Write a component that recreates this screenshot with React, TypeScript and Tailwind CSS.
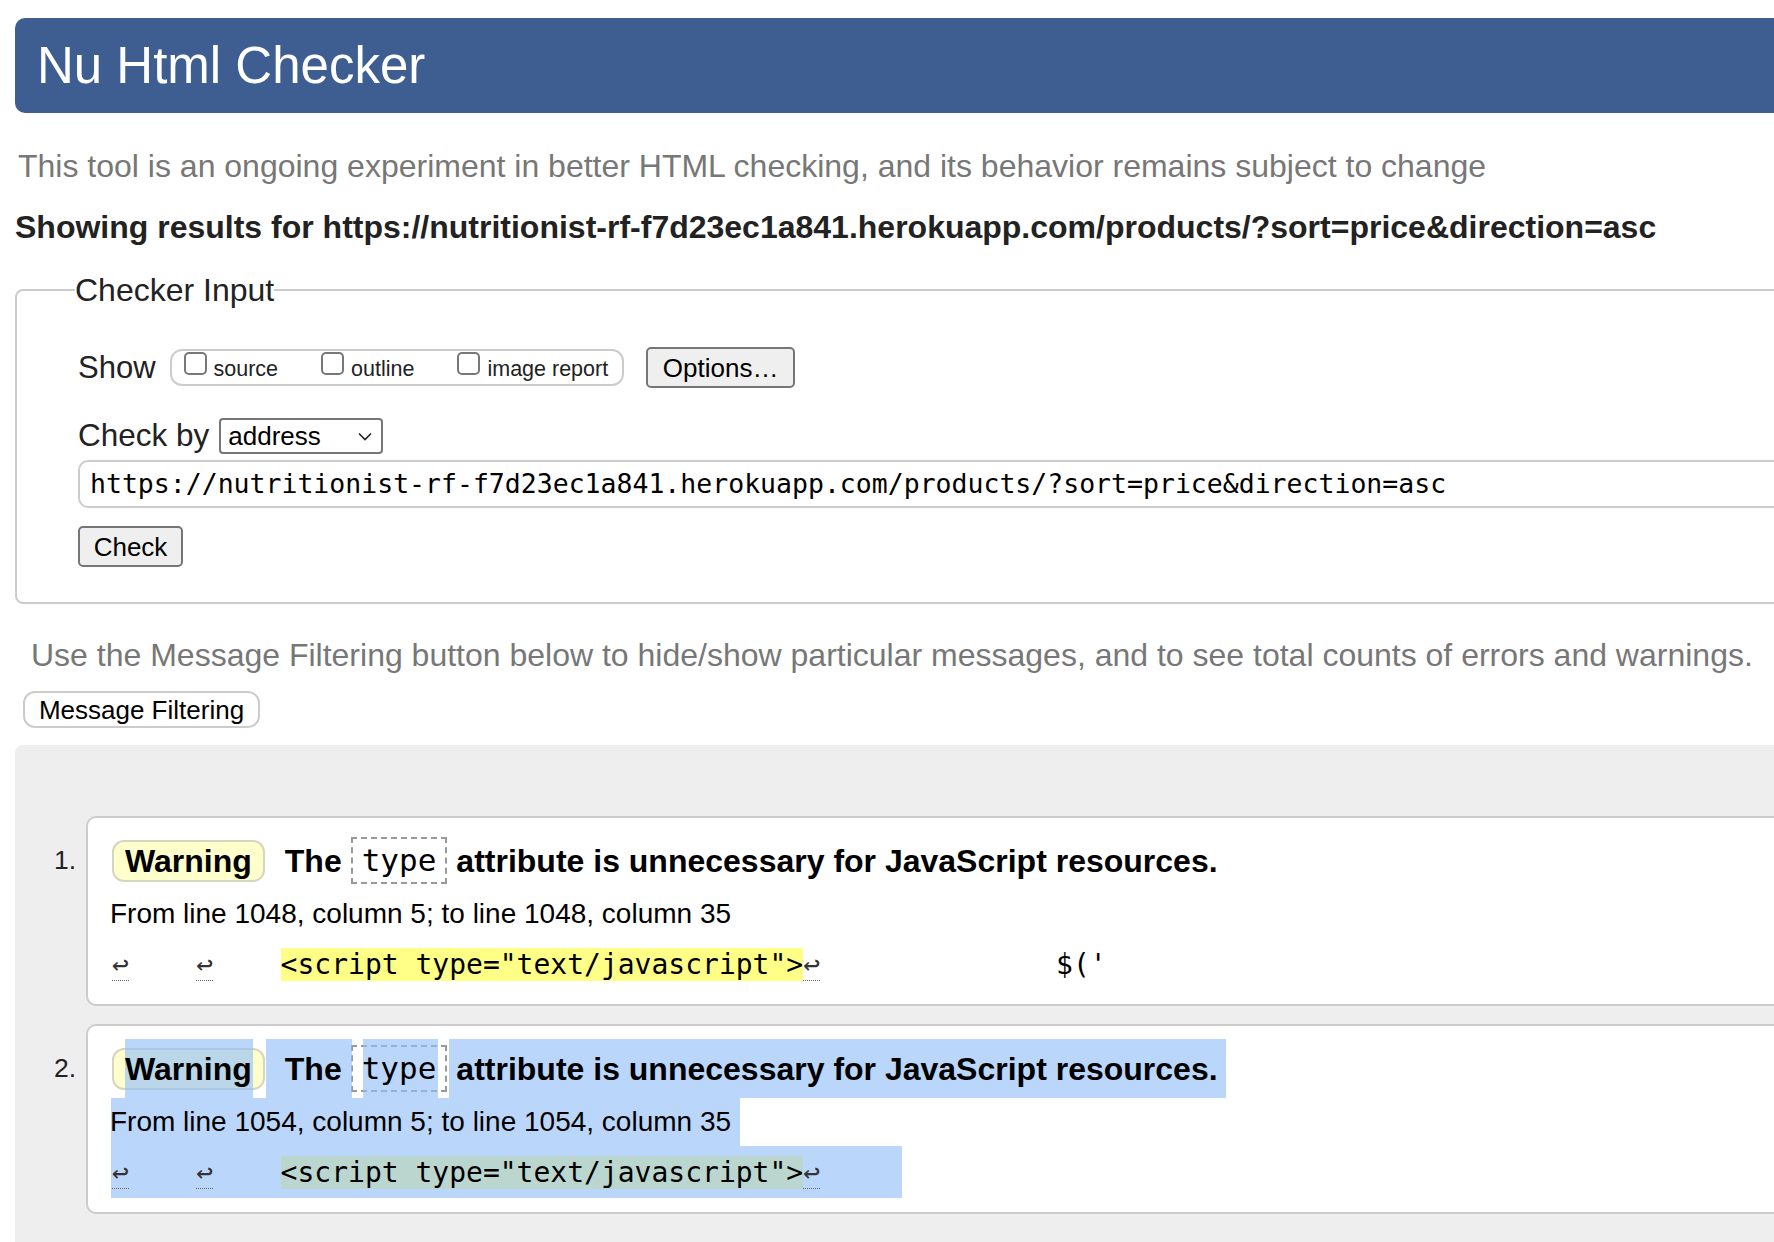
import React from 'react';

const mono = "font-['DejaVu_Sans_Mono','Liberation_Mono',monospace]";
const sel = 'absolute bg-[rgba(147,190,249,0.63)]';

function ReturnMark({ up }: { up: string }) {
    return (
        <span className={`inline-block w-[16.86px] h-[33px] leading-[33px] border-b border-dotted border-[#666] text-[#333] ${up}`}>
            ↩
        </span>
    );
}

function Message({ n, line, selected, tail }: { n: number; line: number; selected?: boolean; tail?: string }) {
    // text sits above the selection boxes, backgrounds stay under them
    const up = selected ? 'relative z-[1]' : '';

    return (
        <li className="flex">
            <span className="w-[51px] text-right text-[26.5px] leading-none mt-[31px] text-[#222]">{n}.</span>
            <div className="relative flex-1 ml-[10px] h-[190px] border-2 border-[#ccc] rounded-[10px] bg-white">
                {selected && (
                    <>
                        <div className={`${sel} left-[37px] top-[13px] w-[128px] h-[59px]`} />
                        <div className={`${sel} left-[178px] top-[13px] w-[86px] h-[59px]`} />
                        <div className={`${sel} left-[275px] top-[13px] w-[75px] h-[59px]`} />
                        <div className={`${sel} left-[361px] top-[13px] w-[777px] h-[59px]`} />
                        <div className={`${sel} left-[23px] top-[72px] w-[629px] h-[48px]`} />
                        <div className={`${sel} left-[23px] top-[120px] w-[791px] h-[52px]`} />
                    </>
                )}

                <div className="mt-[13px] h-[59px] flex items-center pl-[24px] text-[32px] font-bold leading-none text-black">
                    <span className="h-[42px] px-[11px] flex items-center border-2 border-[#d6d6c0] rounded-[12px] bg-[#ffffcc]">
                        <span className={up}>Warning</span>
                    </span>
                    <span className={`ml-[20px] ${up}`}>The</span>
                    <code className={`ml-[9px] h-[47px] px-[9px] flex items-center border-2 border-dashed border-[#999] ${mono} text-[31px] font-normal`}>
                        <span className={up}>type</span>
                    </code>
                    <span className={`ml-[9px] ${up}`}>attribute is unnecessary for JavaScript resources.</span>
                </div>

                <div className="h-[48px] flex items-center pl-[22px] text-[28px] leading-none text-black">
                    <span className={up}>From line {line}, column 5; to line {line}, column 35</span>
                </div>

                <div className={`h-[52px] pl-[24px] ${mono} text-[28px] leading-[54px] whitespace-pre text-black`}>
                    <ReturnMark up={up} />
                    {'    '}
                    <ReturnMark up={up} />
                    {'    '}
                    <span className="bg-[#ffff88]">
                        <span className={up}>{'<script type="text/javascript">'}</span>
                    </span>
                    <ReturnMark up={up} />
                    {tail}
                </div>
            </div>
        </li>
    );
}

export default function App() {
    return (
        <div className="w-[1774px] h-[1242px] overflow-hidden bg-white font-['Liberation_Sans',Arial,sans-serif]">
            <div className="w-[1900px] pl-[15px] pt-[18px]">
                <h1 className="h-[95px] rounded-[10px] bg-[#3e5e91] flex items-center pl-[22px] text-[51px] leading-none text-white">
                    Nu Html Checker
                </h1>

                <p className="mt-[35px] pl-[3px] text-[32px] leading-[36px] text-[#777]">
                    This tool is an ongoing experiment in better HTML checking, and its behavior remains subject to change
                </p>
                <p className="mt-[25px] text-[32px] leading-[36px] font-bold text-[#222]">
                    Showing results for https://nutritionist-rf-f7d23ec1a841.herokuapp.com/products/?sort=price&amp;direction=asc
                </p>

                <fieldset className="mt-[27px] border-2 border-[#ccc] rounded-[8px] pl-[58px] pr-[40px] pb-[35px]">
                    <legend className="text-[32px] leading-[36px] text-[#222]">Checker Input</legend>

                    <div className="ml-[3px] mt-[39px] h-[41px] flex items-center">
                        <span className="text-[31px] leading-none text-[#222]">Show</span>
                        <div className="ml-[14px] h-[37px] flex items-center pl-[12px] pr-[14px] border-2 border-[#ccc] rounded-[12px] text-[21.5px] leading-none text-[#222]">
                            <span className="w-[23px] h-[23px] mb-[8px] border-2 border-[#777] rounded-[5px] bg-white" />
                            <span className="ml-[7px] mt-[4px]">source</span>
                            <span className="ml-[43px] w-[23px] h-[23px] mb-[8px] border-2 border-[#777] rounded-[5px] bg-white" />
                            <span className="ml-[7px] mt-[4px]">outline</span>
                            <span className="ml-[43px] w-[23px] h-[23px] mb-[8px] border-2 border-[#777] rounded-[5px] bg-white" />
                            <span className="ml-[7px] mt-[4px]">image report</span>
                        </div>
                        <button className="ml-[22px] w-[149px] h-[41px] flex items-center justify-center border-2 border-[#767676] rounded-[5px] bg-[#efefef] text-[26px] leading-none text-black">
                            Options…
                        </button>
                    </div>

                    <div className="ml-[3px] mt-[30px] h-[36px] flex items-center">
                        <span className="text-[31.5px] leading-none text-[#222]">Check by</span>
                        <div className="ml-[10px] w-[164px] h-[36px] flex items-center justify-between pl-[7px] pr-[9px] border-2 border-[#767676] rounded-[4px] text-[26px] leading-none text-black">
                            <span>address</span>
                            <svg width="14" height="9" viewBox="0 0 14 9" fill="none">
                                <path d="M1 1.5 L7 7.5 L13 1.5" stroke="#222" strokeWidth="1.6" />
                            </svg>
                        </div>
                    </div>

                    <div className={`ml-[3px] mt-[6px] h-[48px] flex items-center pl-[10px] border-2 border-[#ccc] rounded-[10px] ${mono} text-[26.5px] leading-none text-black whitespace-nowrap`}>
                        https://nutritionist-rf-f7d23ec1a841.herokuapp.com/products/?sort=price&amp;direction=asc
                    </div>

                    <button className="ml-[3px] mt-[18px] w-[105px] h-[41px] flex items-center justify-center border-2 border-[#767676] rounded-[5px] bg-[#efefef] text-[26px] leading-none text-black">
                        Check
                    </button>
                </fieldset>

                <p className="mt-[33px] pl-[16px] text-[32px] leading-[36px] text-[#777]">
                    Use the Message Filtering button below to hide/show particular messages, and to see total counts of errors and warnings.
                </p>
                <button className="ml-[8px] mt-[18px] w-[237px] h-[37px] flex items-center justify-center border-2 border-[#ccc] rounded-[12px] bg-white text-[26px] leading-none text-black">
                    Message Filtering
                </button>

                <div className="mt-[17px] bg-[#eee] rounded-tl-[8px] pt-[71px] pl-[10px] pb-[60px]">
                    <ol className="flex flex-col gap-[18px]">
                        <Message n={1} line={1048} tail={"              $('"} />
                        <Message n={2} line={1054} selected />
                    </ol>
                </div>
            </div>
        </div>
    );
}
